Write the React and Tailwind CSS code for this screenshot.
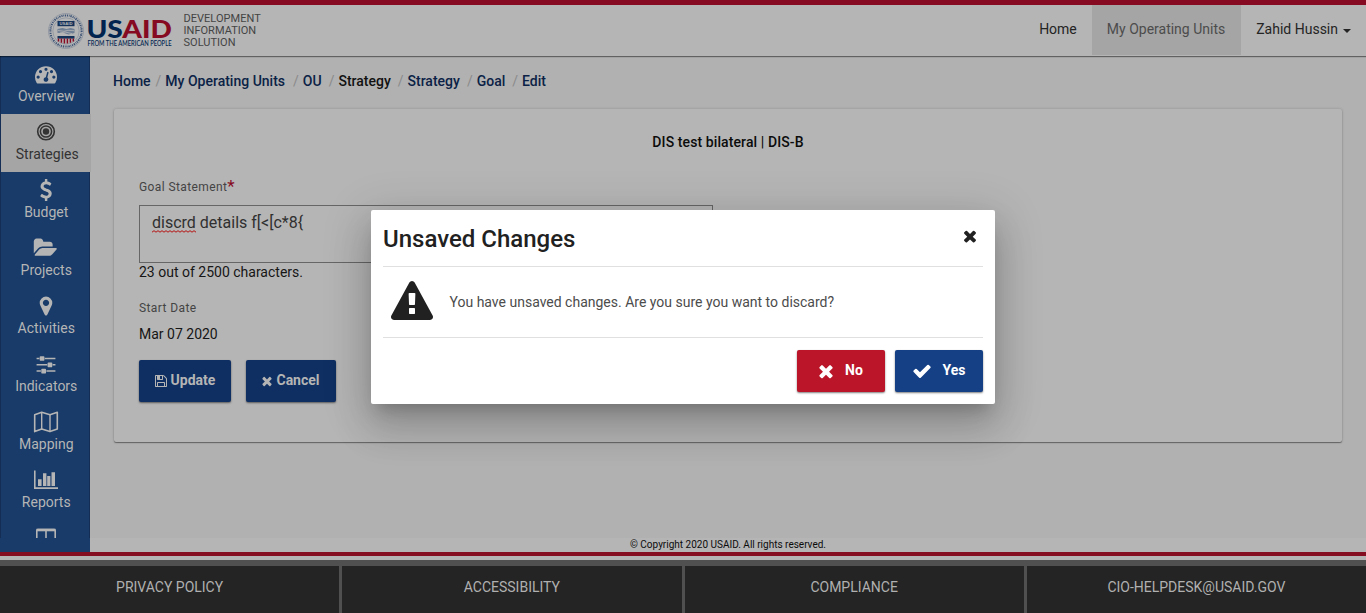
const ICONS = {
  times: "M1490 1322q0 40-28 68l-136 136q-28 28-68 28t-68-28l-294-294-294 294q-28 28-68 28t-68-28l-136-136q-28-28-28-68t28-68l294-294-294-294q-28-28-28-68t28-68l136-136q28-28 68-28t68 28l294 294 294-294q28-28 68-28t68 28l136 136q28 28 28 68t-28 68l-294 294 294 294q28 28 28 68z",
  check: "M1671 566q0 40-28 68l-724 724-136 136q-28 28-68 28t-68-28l-136-136-362-362q-28-28-28-68t28-68l136-136q28-28 68-28t68 28l294 295 656-657q28-28 68-28t68 28l136 136q28 28 28 68z",
  save: "M512 1536h768v-384h-768v384zm896 0h128v-896q0-14-10-38.5t-20-34.5l-281-281q-10-10-34-20t-39-10v416q0 40-28 68t-68 28h-576q-40 0-68-28t-28-68v-416h-128v1280h128v-416q0-40 28-68t68-28h832q40 0 68 28t28 68v416zm-384-928v-320q0-13-9.5-22.5t-22.5-9.5h-192q-13 0-22.5 9.5t-9.5 22.5v320q0 13 9.5 22.5t22.5 9.5h192q13 0 22.5-9.5t9.5-22.5zm640 32v928q0 40-28 68t-68 28h-1344q-40 0-68-28t-28-68v-1344q0-40 28-68t68-28h928q40 0 88 20t76 48l280 280q28 28 48 76t20 88z",
  warning: "M1024 1375v-190q0-14-9.5-23.5t-22.5-9.5h-192q-13 0-22.5 9.5t-9.5 23.5v190q0 14 9.5 23.5t22.5 9.5h192q13 0 22.5-9.5t9.5-23.5zm-2-374l18-459q0-12-10-19-13-11-24-11h-220q-11 0-24 11-10 7-10 21l17 457q0 10 10 16.5t24 6.5h185q14 0 23.5-6.5t10.5-16.5zm-14-934l768 1408q35 63-2 126-17 29-46.5 46t-63.5 17h-1536q-34 0-63.5-17t-46.5-46q-37-63-2-126l768-1408q17-31 47-49t65-18 65 18 47 49z",
  marker: "M1152 640q0-106-75-181t-181-75-181 75-75 181 75 181 181 75 181-75 75-181zm256 0q0 109-33 179l-364 774q-16 33-47.5 52t-67.5 19-67.5-19-46.5-52l-365-774q-33-70-33-179 0-212 150-362t362-150 362 150 150 362z",
  sliders: "M480 1408v128h-352v-128h352zm352-128q26 0 45 19t19 45v256q0 26-19 45t-45 19h-256q-26 0-45-19t-19-45v-256q0-26 19-45t45-19h256zm160-384v128h-864v-128h864zm-640-512v128h-224v-128h224zm1312 1024v128h-736v-128h736zm-960-1152q26 0 45 19t19 45v256q0 26-19 45t-45 19h-256q-26 0-45-19t-19-45v-256q0-26 19-45t45-19h256zm640 512q26 0 45 19t19 45v256q0 26-19 45t-45 19h-256q-26 0-45-19t-19-45v-256q0-26 19-45t45-19h256zm320 128v128h-224v-128h224zm0-512v128h-864v-128h864z",
  folder: "M1943 952q0 31-31 66l-336 396q-43 51-120.5 86.5t-143.5 35.5h-1088q-34 0-60.5-13t-26.5-43q0-31 31-66l336-396q43-51 120.5-86.5t143.5-35.5h1088q34 0 60.5 13t26.5 43zm-343-344v160h-832q-94 0-197 47.5t-164 119.5l-337 396-5 6q0-4-.5-12.5t-.5-12.5v-960q0-92 66-158t158-66h320q92 0 158 66t66 158v32h544q92 0 158 66t66 158z",
  gauge: "M384 1152q0-53-37.5-90.5t-90.5-37.5-90.5 37.5-37.5 90.5 37.5 90.5 90.5 37.5 90.5-37.5 37.5-90.5zm192-448q0-53-37.5-90.5t-90.5-37.5-90.5 37.5-37.5 90.5 37.5 90.5 90.5 37.5 90.5-37.5 37.5-90.5zm428 481l101-382q6-26-7.5-48.5t-38.5-29.5-48 6.5-30 39.5l-101 382q-60 5-107 43.5t-63 98.5q-20 77 20 146t117 89 146-20 89-117q16-60-6-117t-72-91zm660-33q0-53-37.5-90.5t-90.5-37.5-90.5 37.5-37.5 90.5 37.5 90.5 90.5 37.5 90.5-37.5 37.5-90.5zm-640-640q0-53-37.5-90.5t-90.5-37.5-90.5 37.5-37.5 90.5 37.5 90.5 90.5 37.5 90.5-37.5 37.5-90.5zm448 192q0-53-37.5-90.5t-90.5-37.5-90.5 37.5-37.5 90.5 37.5 90.5 90.5 37.5 90.5-37.5 37.5-90.5zm320 448q0 261-141 483-19 29-54 29h-1402q-35 0-54-29-141-221-141-483 0-182 71-348t191-286 286-191 348-71 348 71 286 191 191 286 71 348z",
  dollar: "M1362 1185q0 153-99.5 263.5t-258.5 136.5v175q0 14-9 23t-23 9h-135q-13 0-22.5-9.5t-9.5-22.5v-175q-66-9-127.5-31t-101.5-44.5-74-48-46.5-37.5-17.5-18q-17-21-2-41l103-135q7-10 23-12 15-2 24 9l2 2q113 99 243 125 37 8 74 8 81 0 142.5-43t61.5-122q0-28-15-53t-33.5-42-58.5-37.5-66-32-80-32.5q-39-16-61.5-25t-61.5-26.5-62.5-31-56.5-35.5-53.5-42.5-43.5-49-35.5-58-21-66.5-8.5-78q0-138 98-242t255-134v-180q0-13 9.5-22.5t22.5-9.5h135q14 0 23 9t9 23v176q57 6 110.5 23t87 33.5 63.5 37.5 39 29 15 14q17 18 5 38l-81 146q-8 15-23 16-14 3-27-7-3-3-14.5-12t-39-26.5-58.5-32-74.5-26-85.5-11.5q-95 0-155 43t-60 111q0 26 8.5 48t29.5 41.5 39.5 33 56 31 60.5 27 70 27.5q53 20 81 31.5t76 35 75.5 42.5 62 50 53 63.5 31.5 76.5 13 94z",
};

function Icon({ name, size, wide = false, className = "" }) {
  const units = wide ? 2048 : 1792;
  return (
    <svg
      viewBox={`0 0 ${units} 1792`}
      width={(size * units) / 1792}
      height={size}
      fill="currentColor"
      className={`shrink-0 ${className}`}
      aria-hidden="true"
    >
      <path d={ICONS[name]} />
    </svg>
  );
}

function TargetIcon() {
  return (
    <svg viewBox="0 0 22 22" width="22" height="22" fill="none" stroke="currentColor" className="mr-px" aria-hidden="true">
      <circle cx="11" cy="10.5" r="8.3" strokeWidth="1.6" />
      <circle cx="11" cy="10.5" r="5.6" strokeWidth="1.5" />
      <circle cx="11" cy="10.5" r="3.2" fill="currentColor" stroke="none" />
    </svg>
  );
}

function MapIcon() {
  return (
    <svg viewBox="0 0 26 22" width="26" height="22" fill="none" stroke="currentColor" aria-hidden="true">
      <path d="M1.7 3.7 8.7 1.2 17 3.7 24.3 1.2V18L17 20.6 8.7 18 1.7 20.6Z" strokeWidth="1.6" strokeLinejoin="round" />
      <path d="M8.7 1.2V18M17 3.7V20.6" strokeWidth="1.4" />
    </svg>
  );
}

function ChartIcon() {
  return (
    <svg viewBox="0 0 24 22" width="24" height="22" fill="currentColor" aria-hidden="true">
      <path d="M0 1.5h1.6v16.7H24V20H0Z" />
      <path d="M4 10.3h3.6V17H4ZM9 4.3h3.4V17H9ZM13.2 7h3.2v10h-3.2ZM17.5 3.3H21V17h-3.5Z" />
    </svg>
  );
}

function ColumnsIcon() {
  return (
    <svg viewBox="0 0 22 22" width="22" height="22" fill="none" stroke="currentColor" aria-hidden="true">
      <rect x="1.8" y="3.5" width="18.4" height="16" rx="1" strokeWidth="1.6" />
      <path d="M1.5 4h19" strokeWidth="2.6" />
      <path d="M11 4v15" strokeWidth="1.6" />
    </svg>
  );
}

const NAV = [
  { label: "Overview", icon: <Icon name="gauge" size={22} /> },
  { label: "Strategies", icon: <TargetIcon />, active: true },
  { label: "Budget", icon: <Icon name="dollar" size={22} /> },
  { label: "Projects", icon: <Icon name="folder" size={22} wide /> },
  { label: "Activities", icon: <Icon name="marker" size={22} /> },
  { label: "Indicators", icon: <Icon name="sliders" size={22} /> },
  { label: "Mapping", icon: <MapIcon /> },
  { label: "Reports", icon: <ChartIcon /> },
];

const CRUMBS = [
  { label: "Home", gap: "mr-[5px]" },
  { label: "My Operating Units", gap: "mr-[8px]" },
  { label: "OU", gap: "mr-[7px]" },
  { label: "Strategy", gap: "mr-[7px]", plain: true },
  { label: "Strategy", gap: "mr-[7px]" },
  { label: "Goal", gap: "mr-[7px]" },
  { label: "Edit", gap: "" },
];

function Seal() {
  return (
    <svg viewBox="0 0 36 36" width="36" height="36" aria-hidden="true">
      <circle cx="18" cy="18" r="17.5" fill="none" stroke="#5f7089" strokeWidth="0.4" />
      <circle cx="18" cy="18" r="15.6" fill="none" stroke="#3c5376" strokeWidth="2" strokeDasharray="1.1 0.8 0.7 0.8 1.4 0.9" />
      <circle cx="18" cy="18" r="13.2" fill="none" stroke="#5f7089" strokeWidth="0.4" />
      <path d="M9.5 8h17v5.2h-17Z" fill="#14315a" />
      <text x="18" y="12.1" textAnchor="middle" fill="#b5b5b5" fontFamily="Liberation Sans, sans-serif" fontWeight="700" fontSize="4.2">USAID</text>
      <path d="m9.5 16 5-1 4 1 4-1 4 1v4l-6 1.5-5-1.8-6 .4Z" fill="#6d7d93" />
      <path d="m10 17.5 6 .8 4-1 6 .4M12 20l5-1 7 1.6" stroke="#b5b5b5" strokeWidth="0.8" fill="none" />
      <path d="M9.5 23h17v2.6h-17Z" fill="#14315a" />
      <path d="M10.5 25.6v2.8M13.4 25.6v4.2M16.4 25.6v5M19.4 25.6v5M22.4 25.6v4.2M25.3 25.6v2.8" stroke="#850a22" strokeWidth="1.5" />
    </svg>
  );
}

function Logo() {
  return (
    <svg viewBox="0 0 86 34" width="86" height="34" className="overflow-visible" fontFamily="Lato, sans-serif" aria-label="USAID">
      <text x="-0.6" y="20.6" fontSize="25.4" fontWeight="900" textLength="85.5" lengthAdjust="spacingAndGlyphs" fill="#00244f">
        US<tspan fill="#850a22">AID</tspan>
      </text>
      <text x="0.5" y="28.8" fontSize="6.6" fontWeight="500" textLength="84" lengthAdjust="spacingAndGlyphs" fill="#00244f">FROM THE AMERICAN PEOPLE</text>
    </svg>
  );
}

function Header() {
  return (
    <header className="relative z-10 flex h-[56px] shrink-0 border-t-[5px] border-[#850a22] bg-[#b5b5b5] shadow-[0_1px_1px_rgba(0,0,0,0.45)]">
      <div className="flex pl-[48px] pt-[8px]">
        <Seal />
        <div className="ml-[3px] pt-[4px]"><Logo /></div>
        <div className="ml-[10.5px] text-[11px] leading-[12px] tracking-[0.03px] text-[#444]">
          DEVELOPMENT<br />INFORMATION<br />SOLUTION
        </div>
      </div>
      <nav className="ml-auto flex h-[50px] text-[14px] leading-[48px] text-[#242424]">
        <a className="px-[15px]">Home</a>
        <a className="bg-[#a5a5a5] pl-[15px] pr-[16px] text-[#4c4c4c]">My Operating Units</a>
        <a className="flex items-center pl-[15px] pr-[15px]">
          <span className="-mt-[2px]">Zahid Hussin</span>
          <span className="ml-[5px] mt-px border-x-[4px] border-t-[4px] border-x-transparent border-t-[#242424]" />
        </a>
      </nav>
    </header>
  );
}

function Sidebar() {
  return (
    <aside className="h-[496px] w-[90px] shrink-0 bg-[#183b69]">
      <div className="h-[482px] w-[91px] overflow-hidden border-l border-[#132d55]">
        {NAV.map((item) => (
          <div
            key={item.label}
            className={`flex h-[58px] flex-col items-center pt-[7px] pl-px text-[14px] ${
              item.active ? "relative w-[90px] bg-[#a5a5a5] text-[#333]" : "w-[89px] border-r border-[#132d55] text-[#b5b5b5]"
            }`}
          >
            <div className="flex h-[22px] items-center">{item.icon}</div>
            <span className="mt-px pl-[1.5px] leading-[20px]">{item.label}</span>
          </div>
        ))}
        <div className="flex h-[58px] w-[89px] justify-center border-r border-[#132d55] pl-[2px] pt-[6px] text-[#b5b5b5]">
          <ColumnsIcon />
        </div>
      </div>
    </aside>
  );
}

function Breadcrumbs() {
  return (
    <nav className="mb-[3px] ml-[23px] flex h-[50px] items-center text-[14px] font-medium text-[#0b2246]">
      {CRUMBS.map((crumb, i) => (
        <span key={i} className="flex">
          <span className={`${crumb.gap} ${crumb.plain ? "text-[#111]" : ""}`}>{crumb.label}</span>
          {i < CRUMBS.length - 1 && <span className="mr-[4px] font-normal text-[#8a8a8a]">/</span>}
        </span>
      ))}
    </nav>
  );
}

function Misspelled({ children }) {
  return (
    <span className="relative">
      {children}
      <svg viewBox="0 0 44 3" width="44" height="3" className="absolute -bottom-px left-0" fill="none" aria-hidden="true">
        <path
          d="M0 2.2 2 .7 4 2.2 6 .7 8 2.2 10 .7 12 2.2 14 .7 16 2.2 18 .7 20 2.2 22 .7 24 2.2 26 .7 28 2.2 30 .7 32 2.2 34 .7 36 2.2 38 .7 40 2.2 42 .7 44 2.2"
          stroke="#b51212"
          strokeWidth="1"
        />
      </svg>
    </span>
  );
}

function GoalCard() {
  return (
    <section className="mx-[24px] h-[333px] rounded-[2px] bg-[#b5b5b5] px-[25px] shadow-[0_1px_1px_rgba(0,0,0,0.4),0_0_3px_rgba(0,0,0,0.18)]">
      <h1 className="pt-[23px] text-center text-[14px] leading-[20px] font-medium tracking-[0.1px] text-[#0c0c0c]">DIS test bilateral | DIS-B</h1>
      <div className="mt-[25px] flex h-[20px] text-[12px] leading-[20px] tracking-[0.4px] text-[#444]">
        Goal Statement<span className="-mt-px text-[17px] leading-[20px] text-[#850a22]">*</span>
      </div>
      <div className="mt-[8px] h-[58px] w-[574px] border border-[#666] px-[12px] pt-[5px] text-[16px] leading-[24px] text-[#303030]">
        <Misspelled>discrd</Misspelled> details f[&lt;[c*8&#123;
      </div>
      <div className="-mt-px text-[14px] leading-[20px] text-[#161616]">23 out of 2500 characters.</div>
      <div className="mt-[16px] text-[12px] leading-[20px] tracking-[0.4px] text-[#444]">Start Date</div>
      <div className="mt-[6px] text-[14px] leading-[20px] text-[#161616]">Mar 07 2020</div>
      <div className="mt-[16px] flex gap-[15px] text-[14px] font-bold text-[#b5b5b5]">
        <button className="flex h-[42px] w-[92px] items-center justify-center gap-[3px] rounded-[2px] bg-[#0f2f62] pr-px shadow-[0_1px_2px_rgba(0,0,0,0.5)]">
          <Icon name="save" size={14} />
          <span className="-mt-[2px]">Update</span>
        </button>
        <button className="flex h-[42px] w-[90px] items-center justify-center gap-[2px] rounded-[2px] bg-[#0f2f62] pr-[2px] shadow-[0_1px_2px_rgba(0,0,0,0.5)]">
          <Icon name="times" size={14} />
          <span className="-mt-[2px]">Cancel</span>
        </button>
      </div>
    </section>
  );
}

function Footer() {
  const links = ["PRIVACY POLICY", "ACCESSIBILITY", "COMPLIANCE", "CIO-HELPDESK@USAID.GOV"];
  return (
    <footer className="grid h-[53px] grid-cols-4 gap-[3px] border-t-[6px] border-[#505050] bg-[#505050] text-[14px] text-[#b0b0b0]">
      {links.map((link) => (
        <a key={link} className="bg-[#242424] text-center leading-[42px]">{link}</a>
      ))}
    </footer>
  );
}

function Dialog() {
  return (
    <div
      role="dialog"
      className="absolute left-[371px] top-[210px] z-20 h-[194px] w-[624px] rounded-[2px] bg-white px-[12px] text-[#212121] shadow-[0_11px_15px_-7px_rgba(0,0,0,0.2),0_24px_38px_3px_rgba(0,0,0,0.14),0_9px_46px_8px_rgba(0,0,0,0.12)]"
    >
      <div className="flex h-[57px] items-center justify-between border-b border-[#e0e0e0]">
        <h2 className="pt-[2px] text-[24px] leading-[32px] font-medium">Unsaved Changes</h2>
        <Icon name="times" size={18} className="mr-[4px] -mt-[4px]" />
      </div>
      <div className="flex h-[71px] items-center border-b border-[#e0e0e0] pl-[8px]">
        <Icon name="warning" size={42} />
        <p className="ml-[16.5px] text-[14px] leading-[20px] text-[#4c4c4c]">You have unsaved changes. Are you sure you want to discard?</p>
      </div>
      <div className="flex justify-end gap-[10px] pt-[12px] text-[14px] font-bold text-white">
        <button className="flex h-[42px] w-[88px] items-center rounded-[2px] bg-[#ba1529] pl-[19px] shadow-[0_1px_2px_rgba(0,0,0,0.5)]">
          <Icon name="times" size={20} />
          <span className="-mt-[2px] ml-[9px]">No</span>
        </button>
        <button className="flex h-[42px] w-[88px] items-center rounded-[2px] bg-[#154085] pl-[17px] shadow-[0_1px_2px_rgba(0,0,0,0.5)]">
          <Icon name="check" size={20} />
          <span className="-mt-[2px] ml-[10.5px]">Yes</span>
        </button>
      </div>
    </div>
  );
}

export default function App() {
  return (
    <div className="relative flex h-[613px] w-[1366px] flex-col overflow-hidden bg-[#b5b5b5] font-[Roboto,sans-serif]">
      <Header />
      <div className="flex">
        <Sidebar />
        <main className="flex flex-1 flex-col">
          <div className="h-[482px] bg-[#b1b1b1]">
            <Breadcrumbs />
            <GoalCard />
          </div>
          <p className="h-[14px] text-center text-[10px] leading-[14px] text-[#0c0c0c]">© Copyright 2020 USAID. All rights reserved.</p>
        </main>
      </div>
      <div className="mb-[4px] h-[4px] shrink-0 bg-[#850f20]" />
      <Footer />
      <Dialog />
    </div>
  );
}
